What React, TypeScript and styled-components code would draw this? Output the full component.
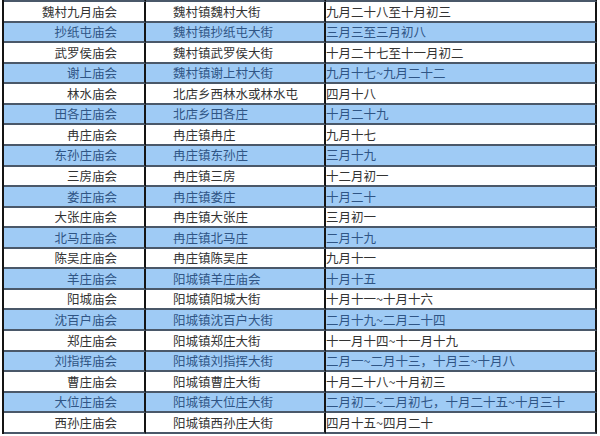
import React from 'react';
import styled, { createGlobalStyle } from 'styled-components';

const GlobalStyle = createGlobalStyle`
  html, body {
    margin: 0;
    padding: 0;
    background: #ffffff;
  }
  body {
    font-family: 'Noto Sans CJK SC', 'Noto Sans', sans-serif;
  }
`;

const Page = styled.div`
  width: 600px;
  height: 436px;
  overflow: hidden;
  padding-left: 2px;
  box-sizing: border-box;
  background: #ffffff;
`;

const Table = styled.div`
  display: grid;
  grid-template-columns: 142px 180px 271px;
  grid-template-rows: 2px repeat(21, 20.57px);
  width: 593px;
  border-left: 2px solid #141414;
  box-sizing: border-box;
`;

const Cell = styled.div<{ $alt?: boolean; $col: number; $cut?: boolean }>`
  display: flex;
  align-items: center;
  box-sizing: border-box;
  background: ${({ $alt }) => ($alt ? '#9fcbf5' : '#ffffff')};
  color: ${({ $alt }) => ($alt ? '#2f5585' : '#333333')};
  border-right: 2px solid #141414;
  border-bottom: 2px solid #4a5869;
  font-size: 12.5px;
  line-height: 1;
  white-space: nowrap;
  overflow: hidden;
  justify-content: ${({ $col }) => ($col === 0 ? 'flex-end' : 'flex-start')};
  padding-right: ${({ $col }) => ($col === 0 ? '27px' : '0')};
  padding-left: ${({ $col }) => ($col === 1 ? '27px' : '0')};
  padding-top: 1px;
  ${({ $cut }) => ($cut ? 'padding: 0;' : '')}
`;

const rows: [string, string, string][] = [
  ['魏村九月庙会', '魏村镇魏村大街', '九月二十八至十月初三'],
  ['抄纸屯庙会', '魏村镇抄纸屯大街', '三月三至三月初八'],
  ['武罗侯庙会', '魏村镇武罗侯大街', '十月二十七至十一月初二'],
  ['谢上庙会', '魏村镇谢上村大街', '九月十七~九月二十二'],
  ['林水庙会', '北店乡西林水或林水屯', '四月十八'],
  ['田各庄庙会', '北店乡田各庄', '十月二十九'],
  ['冉庄庙会', '冉庄镇冉庄', '九月十七'],
  ['东孙庄庙会', '冉庄镇东孙庄', '三月十九'],
  ['三房庙会', '冉庄镇三房', '十二月初一'],
  ['娄庄庙会', '冉庄镇娄庄', '十月二十'],
  ['大张庄庙会', '冉庄镇大张庄', '三月初一'],
  ['北马庄庙会', '冉庄镇北马庄', '二月十九'],
  ['陈吴庄庙会', '冉庄镇陈吴庄', '九月十一'],
  ['羊庄庙会', '阳城镇羊庄庙会', '十月十五'],
  ['阳城庙会', '阳城镇阳城大街', '十月十一~十月十六'],
  ['沈百户庙会', '阳城镇沈百户大街', '二月十九~二月二十四'],
  ['郑庄庙会', '阳城镇郑庄大街', '十一月十四~十一月十九'],
  ['刘指挥庙会', '阳城镇刘指挥大街', '二月一~二月十三，十月三~十月八'],
  ['曹庄庙会', '阳城镇曹庄大街', '十月二十八~十月初三'],
  ['大位庄庙会', '阳城镇大位庄大街', '二月初二~二月初七，十月二十五~十月三十'],
  ['西孙庄庙会', '阳城镇西孙庄大街', '四月十五~四月二十'],
];

const App = () => {
  return (
    <Page>
      <GlobalStyle />
      <Table>
        {[0, 1, 2].map((c) => (
          <Cell key={`top-${c}`} $alt $col={c} $cut />
        ))}
        {rows.map((row, i) =>
          row.map((text, c) => (
            <Cell key={`${i}-${c}`} $alt={i % 2 === 1} $col={c}>
              {text}
            </Cell>
          ))
        )}
      </Table>
    </Page>
  );
};

export default App;
